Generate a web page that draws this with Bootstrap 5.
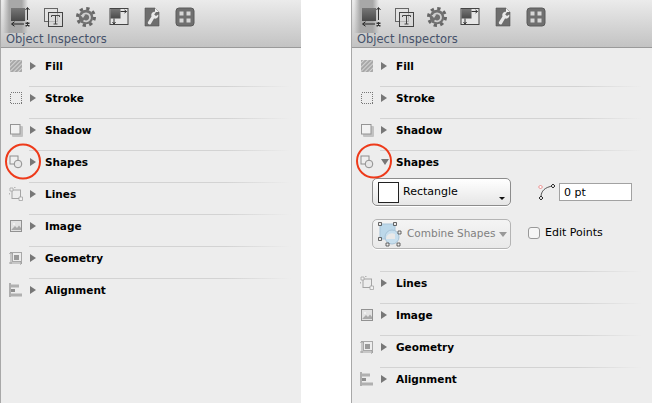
<!DOCTYPE html>
<html lang="en">
<head>
    <meta charset="UTF-8">
    <title>Object Inspectors</title>
    <link href="https://cdn.jsdelivr.net/npm/bootstrap@5.3.3/dist/css/bootstrap.min.css" rel="stylesheet">
    <style>
        html, body { background: #fff; height: 403px; overflow: hidden; }
        body { font-family: "DejaVu Sans", "Liberation Sans", sans-serif; font-size: 11px; color: #000; }
        .insp-wrap { gap: 50px; }
        .insp-panel { position: relative; width: 301px; height: 403px; background: #ededed; border-left: 1px solid #a8a8a8; }
        .insp-top { height: 48px; background: linear-gradient(#ebebeb, #c3c3c3); border-bottom: 1px solid #9a9a9a; }
        .insp-tools { padding-left: 2px; height: 32px; }
        .insp-tool { width: 33px; height: 33px; display: flex; justify-content: center; padding-top: 7px; }
        .insp-tool-on { width: 25px; margin-right: 8px; justify-content: flex-start; padding-left: 7px; background: linear-gradient(90deg, rgba(170,170,170,0), #a8a8a8 25%, #a8a8a8 75%, rgba(170,170,170,0)); }
        .insp-title { font-size: 11.5px; line-height: 14px; color: #46526a; padding-left: 5px; }
        .insp-list { padding-top: 6px; }
        .insp-row { min-height: 32px; padding-top: 4px; background: linear-gradient(90deg, #d3d3d3 75%, rgba(211,211,211,0)) no-repeat 28px 0 / 262px 1px; }
        .insp-row-first { background: none; }
        .insp-head { height: 16px; padding-left: 8px; }
        .insp-head svg { display: block; flex-shrink: 0; }
        .insp-arrow { margin-left: 7px; }
        .insp-arrow-open { margin-right: -2px; }
        .insp-label { margin-left: 9px; font-weight: 700; font-size: 10.5px; line-height: 16px; }
        .insp-body { margin-top: 8px; padding: 0 0 22px 20px; }
        .insp-body-low { margin-top: 13px; }
        .insp-popup { width: 139px; height: 28px; padding: 0 0 0 5px; border: 1px solid #8c8c8c; border-radius: 5px; font-size: 11px; text-align: left; background: linear-gradient(#fff, #e6e6e6); color: #000; box-shadow: 0 1px 0 #fff; position: relative; white-space: nowrap; }
        .insp-popup:disabled { opacity: 1; color: #808080; border-color: #b4b4b4; background: linear-gradient(#f4f4f4, #e9e9e9); height: 30px; padding-left: 4px; font-size: 10.5px; }
        .insp-swatch { width: 21px; height: 21px; background: #fff; border: 1px solid #222; }
        .insp-caret { position: absolute; right: 5px; bottom: 5px; border-left: 3px solid transparent; border-right: 3px solid transparent; border-top: 3px solid #111; }
        .insp-caret-off { position: static; margin-left: 4px; border-left-width: 4px; border-right-width: 4px; border-top: 5px solid #999; }
        .insp-corner { margin-left: 26px; margin-right: 4px; }
        .insp-input { width: 73px; height: 18px; padding: 0 4px; border: 1px solid #a2a2a2; border-radius: 0; font-size: 11px; font-family: inherit; color: #000; }
        .insp-check { margin: -2px 0 0 17px; min-height: 0; padding-left: 0; gap: 5px; }
        .insp-check .form-check-input { float: none; margin: 0; width: 12px; height: 12px; border: 1px solid #999; border-radius: 3px; background-color: #f6f6f6; }
        .insp-check .form-check-label { font-size: 11px; line-height: 14px; }
        .insp-ring { position: absolute; left: 4px; top: 143px; pointer-events: none; }
        .insp-sprites { position: absolute; width: 0; height: 0; }
    </style>
</head>
<body>

<svg class="insp-sprites" aria-hidden="true">
    <defs>
        <pattern id="hatch" width="3" height="3" patternUnits="userSpaceOnUse" patternTransform="rotate(45)">
            <rect width="3" height="3" fill="#a8a8a8"/><rect width="1" height="3" fill="#d4d4d4"/>
        </pattern>
        <linearGradient id="darkFill" x1="0" y1="0" x2="0" y2="1"><stop offset="0" stop-color="#777"/><stop offset="1" stop-color="#4a4a4a"/></linearGradient>
    </defs>
    <symbol id="t-doc" viewBox="0 0 20 20">
        <rect x="1" y="1" width="14" height="13" fill="url(#darkFill)"/>
        <path d="M17.500 1v12M15.500 3l2-2.500 2 2.500M17.500 15v4" stroke="#333" fill="none"/>
        <path d="M2 17h12M4.500 14.800 1.500 17l3 2.200" stroke="#222" fill="none"/>
        <path d="M15.500 15.500h1.500v1.500h-1.500zM18 15.500h1.500v1.500h-1.500zM15.500 18h1.500v1.500h-1.500zM18 18h1.500v1.500h-1.500z" fill="#333"/>
    </symbol>
    <symbol id="t-text" viewBox="0 0 20 20">
        <rect x="1.500" y="1.500" width="13" height="13" fill="#e2e2e2" stroke="#666"/>
        <rect x="5.500" y="5.500" width="14" height="14" fill="#d8d8d8" fill-opacity=".7" stroke="#444"/>
        <path d="M8.500 10V8.500h8V10M12.500 8.500v8.500M10.500 17h4" stroke="#444" fill="none"/>
    </symbol>
    <symbol id="t-gear" viewBox="0 0 20 20">
        <circle cx="10" cy="10" r="8.500" fill="none" stroke="#666" stroke-width="3" stroke-dasharray="3.300 3.370"/>
        <circle cx="10" cy="10" r="7.300" fill="#707070"/>
        <path d="M6.500 8.500a4 4 0 1 1 1 5" fill="none" stroke="#cfcfcf" stroke-width="1.800"/>
        <path d="M4.500 8h4.500l-2 3z" fill="#cfcfcf"/>
    </symbol>
    <symbol id="t-layout" viewBox="0 0 20 20">
        <rect x="1" y="1.500" width="18" height="16" fill="#e6e6e6" stroke="#444"/>
        <rect x="1.500" y="2" width="10" height="9.500" fill="url(#darkFill)"/>
        <path d="M11.500 4.500h6M15.500 3l2 1.500-2 1.500M5 11.500v5.500M3.500 15l1.500 2 1.500-2" stroke="#333" fill="none"/>
    </symbol>
    <symbol id="t-wrench" viewBox="0 0 20 20">
        <path d="M3 1h10l4 4v14H3z" fill="#6e6e6e" stroke="#555" stroke-width=".6"/>
        <path d="M13 1v4h4z" fill="#f0f0f0"/>
        <path d="M14 5c-3-1-5.500 1.500-4.500 4.500L6 15c-1 1.500 1.500 3.500 2.800 2L12 11.500c3 .8 5-1.800 4.200-4L14 9l-1.800-1.500z" fill="#e8e8e8"/>
    </symbol>
    <symbol id="t-grid" viewBox="0 0 20 20">
        <rect x="1" y="1" width="18" height="18" rx="3" fill="#707070" stroke="#5a5a5a"/>
        <path d="M4.500 4.500h4v4h-4zM11.500 4.500h4v4h-4zM4.500 11.500h4v4h-4zM11.500 11.500h4v4h-4z" fill="#d8d8d8"/>
    </symbol>
    <symbol id="i-fill" viewBox="0 0 14 14"><rect x="1" y="1" width="12" height="12" fill="url(#hatch)"/></symbol>
    <symbol id="i-stroke" viewBox="0 0 14 14"><rect x="1.500" y="1.500" width="11" height="11" fill="none" stroke="#777" stroke-dasharray="1 1" shape-rendering="crispEdges"/></symbol>
    <symbol id="i-shadow" viewBox="0 0 14 14">
        <rect x="3" y="3" width="11" height="11" rx="1" fill="#c2c2c2"/>
        <rect x="1.500" y="1.500" width="9.500" height="9.500" fill="#f2f2f2" stroke="#949494"/>
    </symbol>
    <symbol id="i-shapes" viewBox="0 0 14 14">
        <rect x="1" y="1" width="8" height="8" fill="#efefef" stroke="#8e8e8e"/>
        <circle cx="9" cy="9" r="3.800" fill="#e8e8e8" stroke="#8e8e8e"/>
    </symbol>
    <symbol id="i-lines" viewBox="0 0 14 14">
        <rect x="3" y="3" width="8.500" height="8.500" fill="none" stroke="#a4a4a4"/>
        <path d="M1 1h3v3H1zM5 .5h1.500M.5 6v1.500M10 10h3.500v3.500H10z" fill="#f2f2f2" stroke="#a4a4a4" stroke-width=".8"/>
    </symbol>
    <symbol id="i-image" viewBox="0 0 14 14">
        <rect x="1.500" y="1.500" width="11" height="11" fill="#e2e2e2" stroke="#929292"/>
        <path d="M2.500 10.500 6 7l2 2 2-2.500 2 2.500v2h-9.500z" fill="#a8a8a8"/>
        <circle cx="5" cy="5" r="1" fill="#f4f4f4"/>
    </symbol>
    <symbol id="i-geometry" viewBox="0 0 14 14">
        <rect x="3.500" y="1.500" width="9" height="9" fill="none" stroke="#a8a8a8"/>
        <rect x="5" y="4" width="5" height="5" fill="#9a9a9a"/>
        <path d="M2 1v12M.5 3 2 1l1.500 2M0 12h13M11 10.500l2 1.500-2 1.500" fill="none" stroke="#999" stroke-width=".9"/>
    </symbol>
    <symbol id="i-align" viewBox="0 0 14 14">
        <path d="M1 0v14" stroke="#939393" stroke-width="1.400"/>
        <path d="M2 1.500h8v3H2zM2 10.500h11v3H2z" fill="#b0b0b0"/>
        <path d="M2 6h4v3H2z" fill="#8e8e8e"/>
    </symbol>
</svg>

<div class="d-flex insp-wrap">
    <!-- Collapsed -->
    <section class="insp-panel">
        <div class="insp-top">
            <div class="d-flex insp-tools">
                <div class="insp-tool insp-tool-on"><svg width="20" height="20" class="flex-shrink-0"><use href="#t-doc"/></svg></div>
                <div class="insp-tool"><svg width="20" height="20"><use href="#t-text"/></svg></div>
                <div class="insp-tool"><svg width="20" height="20"><use href="#t-gear"/></svg></div>
                <div class="insp-tool"><svg width="20" height="20"><use href="#t-layout"/></svg></div>
                <div class="insp-tool"><svg width="20" height="20"><use href="#t-wrench"/></svg></div>
                <div class="insp-tool"><svg width="20" height="20"><use href="#t-grid"/></svg></div>
            </div>
            <div class="insp-title">Object Inspectors</div>
        </div>
        <div class="insp-list">
            <div class="insp-row insp-row-first"><div class="d-flex align-items-center insp-head"><svg width="14" height="14"><use href="#i-fill"/></svg><svg class="insp-arrow" width="6" height="8"><path d="M0 0l6 4-6 4z" fill="#777"/></svg><span class="insp-label">Fill</span></div></div>
            <div class="insp-row"><div class="d-flex align-items-center insp-head"><svg width="14" height="14"><use href="#i-stroke"/></svg><svg class="insp-arrow" width="6" height="8"><path d="M0 0l6 4-6 4z" fill="#777"/></svg><span class="insp-label">Stroke</span></div></div>
            <div class="insp-row"><div class="d-flex align-items-center insp-head"><svg width="14" height="14"><use href="#i-shadow"/></svg><svg class="insp-arrow" width="6" height="8"><path d="M0 0l6 4-6 4z" fill="#777"/></svg><span class="insp-label">Shadow</span></div></div>
            <div class="insp-row"><div class="d-flex align-items-center insp-head"><svg width="14" height="14"><use href="#i-shapes"/></svg><svg class="insp-arrow" width="6" height="8"><path d="M0 0l6 4-6 4z" fill="#777"/></svg><span class="insp-label">Shapes</span></div></div>
            <div class="insp-row"><div class="d-flex align-items-center insp-head"><svg width="14" height="14"><use href="#i-lines"/></svg><svg class="insp-arrow" width="6" height="8"><path d="M0 0l6 4-6 4z" fill="#777"/></svg><span class="insp-label">Lines</span></div></div>
            <div class="insp-row"><div class="d-flex align-items-center insp-head"><svg width="14" height="14"><use href="#i-image"/></svg><svg class="insp-arrow" width="6" height="8"><path d="M0 0l6 4-6 4z" fill="#777"/></svg><span class="insp-label">Image</span></div></div>
            <div class="insp-row"><div class="d-flex align-items-center insp-head"><svg width="14" height="14"><use href="#i-geometry"/></svg><svg class="insp-arrow" width="6" height="8"><path d="M0 0l6 4-6 4z" fill="#777"/></svg><span class="insp-label">Geometry</span></div></div>
            <div class="insp-row"><div class="d-flex align-items-center insp-head"><svg width="14" height="14"><use href="#i-align"/></svg><svg class="insp-arrow" width="6" height="8"><path d="M0 0l6 4-6 4z" fill="#777"/></svg><span class="insp-label">Alignment</span></div></div>
        </div>
        <svg class="insp-ring" width="37" height="37"><ellipse cx="18" cy="18.500" rx="17" ry="17" fill="none" stroke="#ee3a1a" stroke-width="2"/></svg>
    </section>

    <!-- Shapes expanded -->
    <section class="insp-panel">
        <div class="insp-top">
            <div class="d-flex insp-tools">
                <div class="insp-tool insp-tool-on"><svg width="20" height="20" class="flex-shrink-0"><use href="#t-doc"/></svg></div>
                <div class="insp-tool"><svg width="20" height="20"><use href="#t-text"/></svg></div>
                <div class="insp-tool"><svg width="20" height="20"><use href="#t-gear"/></svg></div>
                <div class="insp-tool"><svg width="20" height="20"><use href="#t-layout"/></svg></div>
                <div class="insp-tool"><svg width="20" height="20"><use href="#t-wrench"/></svg></div>
                <div class="insp-tool"><svg width="20" height="20"><use href="#t-grid"/></svg></div>
            </div>
            <div class="insp-title">Object Inspectors</div>
        </div>
        <div class="insp-list">
            <div class="insp-row insp-row-first"><div class="d-flex align-items-center insp-head"><svg width="14" height="14"><use href="#i-fill"/></svg><svg class="insp-arrow" width="6" height="8"><path d="M0 0l6 4-6 4z" fill="#777"/></svg><span class="insp-label">Fill</span></div></div>
            <div class="insp-row"><div class="d-flex align-items-center insp-head"><svg width="14" height="14"><use href="#i-stroke"/></svg><svg class="insp-arrow" width="6" height="8"><path d="M0 0l6 4-6 4z" fill="#777"/></svg><span class="insp-label">Stroke</span></div></div>
            <div class="insp-row"><div class="d-flex align-items-center insp-head"><svg width="14" height="14"><use href="#i-shadow"/></svg><svg class="insp-arrow" width="6" height="8"><path d="M0 0l6 4-6 4z" fill="#777"/></svg><span class="insp-label">Shadow</span></div></div>
            <div class="insp-row">
                <div class="d-flex align-items-center insp-head"><svg width="14" height="14"><use href="#i-shapes"/></svg><svg class="insp-arrow insp-arrow-open" width="8" height="6"><path d="M0 0h8l-4 6z" fill="#777"/></svg><span class="insp-label">Shapes</span></div>
                <div class="insp-body">
                    <div class="d-flex align-items-center">
                        <button type="button" class="btn d-flex align-items-center gap-1 insp-popup"><span class="insp-swatch"></span><span>Rectangle</span><span class="insp-caret"></span></button>
                        <svg class="insp-corner" width="18" height="18" viewBox="0 0 18 18">
                            <path d="M4 14C4 8 8 4 16 3" fill="none" stroke="#555"/>
                            <path d="M1.500 4 3.500 2 5.500 4 3.500 6z" fill="#fff" stroke="#e88"/>
                            <path d="M14 3 16 1 18 3 16 5zM2 15l2-2 2 2-2 2z" fill="#ddd" stroke="#333"/>
                        </svg>
                        <input type="text" class="form-control insp-input" value="0 pt">
                    </div>
                    <div class="d-flex align-items-center insp-body-low">
                        <button type="button" class="btn d-flex align-items-center insp-popup" disabled>
                            <svg width="26" height="26" viewBox="0 0 26 26" class="flex-shrink-0">
                                <rect x="3" y="3" width="15" height="15" fill="#bcd8ea" stroke="#a8c4d8"/>
                                <circle cx="15" cy="16" r="7" fill="#c8dfee" stroke="#a8c4d8"/>
                                <path d="M9 18a6 6 0 0 1 9-5v5z" fill="#e9e9e9"/>
                                <path d="M1.500 1.500h3v3h-3zM16.500 1.500h3v3h-3zM1.500 16.500h3v3h-3zM9 22h3v3H9zM20 22h3v3h-3zM21 10h3v3h-3z" fill="#eee" stroke="#444" stroke-width=".8"/>
                            </svg>
                            <span class="ms-1">Combine Shapes</span><span class="insp-caret insp-caret-off"></span>
                        </button>
                        <div class="form-check d-flex align-items-center insp-check">
                            <input class="form-check-input" type="checkbox" id="editPoints">
                            <label class="form-check-label" for="editPoints">Edit Points</label>
                        </div>
                    </div>
                </div>
            </div>
            <div class="insp-row"><div class="d-flex align-items-center insp-head"><svg width="14" height="14"><use href="#i-lines"/></svg><svg class="insp-arrow" width="6" height="8"><path d="M0 0l6 4-6 4z" fill="#777"/></svg><span class="insp-label">Lines</span></div></div>
            <div class="insp-row"><div class="d-flex align-items-center insp-head"><svg width="14" height="14"><use href="#i-image"/></svg><svg class="insp-arrow" width="6" height="8"><path d="M0 0l6 4-6 4z" fill="#777"/></svg><span class="insp-label">Image</span></div></div>
            <div class="insp-row"><div class="d-flex align-items-center insp-head"><svg width="14" height="14"><use href="#i-geometry"/></svg><svg class="insp-arrow" width="6" height="8"><path d="M0 0l6 4-6 4z" fill="#777"/></svg><span class="insp-label">Geometry</span></div></div>
            <div class="insp-row"><div class="d-flex align-items-center insp-head"><svg width="14" height="14"><use href="#i-align"/></svg><svg class="insp-arrow" width="6" height="8"><path d="M0 0l6 4-6 4z" fill="#777"/></svg><span class="insp-label">Alignment</span></div></div>
        </div>
        <svg class="insp-ring" width="37" height="37"><ellipse cx="18" cy="18" rx="17" ry="16.500" fill="none" stroke="#ee3a1a" stroke-width="2"/></svg>
    </section>
</div>

<script src="https://cdn.jsdelivr.net/npm/bootstrap@5.3.3/dist/js/bootstrap.bundle.min.js"></script>
</body>
</html>
